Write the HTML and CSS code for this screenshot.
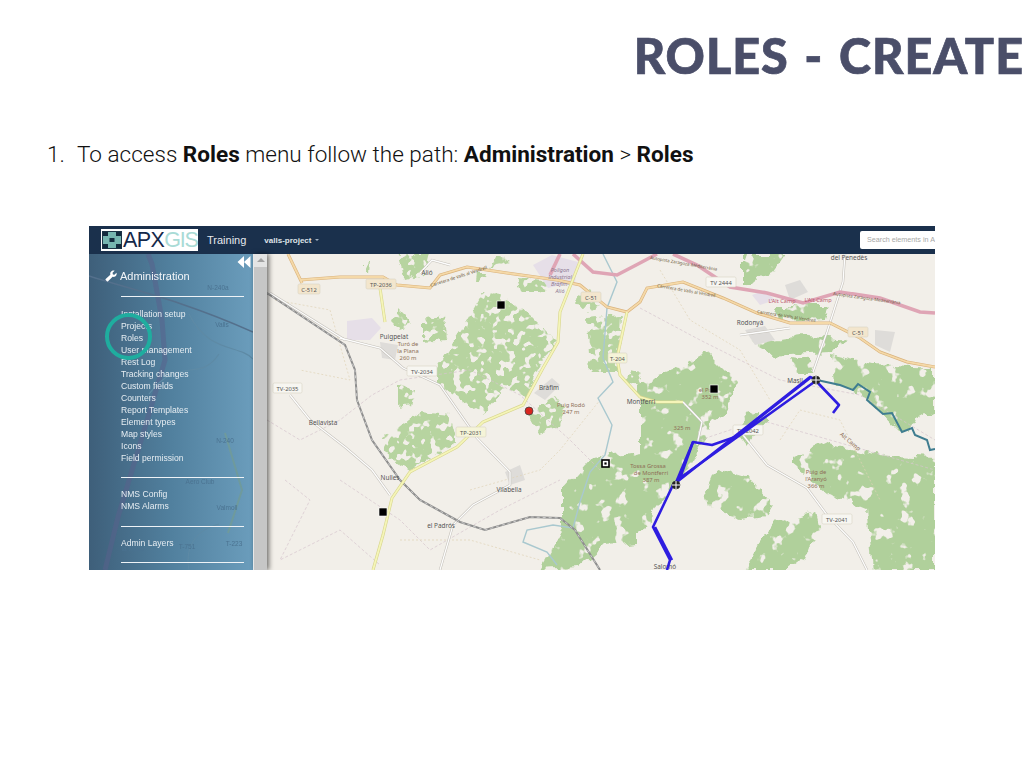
FILE: index.html
```html
<!DOCTYPE html>
<html lang="en">

<head>
    <meta charset="UTF-8">
    <title>Roles - Create</title>
    <link rel="stylesheet" href="styles.css">
</head>

<body>
    <div class="slide">
        <h1 class="slideTitle">ROLES - CREATE</h1>

        <ol class="steps">
            <li class="step">
                <span class="stepNumber">1.</span>
                <span>To access <b>Roles</b> menu follow the path: <b>Administration</b> &gt; <b>Roles</b></span>
            </li>
        </ol>

        <div class="app">
            <div class="appHeader">
                <div class="logo">
                    <svg class="logoMark" viewBox="0 0 20 18">
                        <rect width="20" height="18" fill="#1c3346" />
                        <rect x="1" y="1" width="18" height="16" fill="#76b5b0" />
                        <rect x="1" y="1" width="5" height="4" fill="#132a3e" />
                        <rect x="14" y="1" width="5" height="4" fill="#132a3e" />
                        <rect x="7.5" y="7" width="5" height="4" fill="#132a3e" />
                        <rect x="1" y="13" width="5" height="4" fill="#132a3e" />
                        <rect x="14" y="13" width="5" height="4" fill="#132a3e" />
                    </svg>
                    <span class="logoApx">APX</span><span class="logoGis">GIS</span>
                </div>
                <span class="appName">Training</span>
                <span class="projectName">valls-project</span>
                <span class="projectCaret"></span>
                <div class="searchBox">Search elements in A</div>
            </div>

            <div class="appBody">
                <div class="sidebar">
                    <svg class="sidebarMap" viewBox="0 0 164 316">
                        <path d="M59 0 63 10 73 66 76 106 60 160 29 263 16 316" fill="none" stroke="#5a5f8c" stroke-width="5" opacity=".5" />
                        <path d="M0 22 C40 35 90 45 164 78" fill="none" stroke="#54708c" stroke-width="1.5" />
                        <path d="M100 60 C120 100 150 90 164 105 M60 140 C90 100 110 130 130 100" fill="none" stroke="#5e8aa5" stroke-width="1.2" />
                        <path d="M136 179 153 236 139 279" fill="none" stroke="#6f9a9c" stroke-width="2" />
                        <path d="M100 316 C95 290 110 275 130 270" fill="none" stroke="#5e8aa5" stroke-width="1" />
                        <text class="ghostText" x="129" y="36">N-240a</text>
                        <text class="ghostText" x="133" y="73">Valls</text>
                        <text class="ghostText" x="136" y="189">N-240</text>
                        <text class="ghostText" x="111" y="230">Aero Club</text>
                        <text class="ghostText" x="138" y="256">Valmoll</text>
                        <text class="ghostText" x="44" y="297">la Masó</text>
                        <text class="ghostText" x="98" y="295">T-751</text>
                        <text class="ghostText" x="145" y="292">T-223</text>
                    </svg>
                    <button class="collapseBtn" type="button">
                        <svg viewBox="0 0 14 12" width="14" height="12">
                            <path d="M7 0 L0.5 6 L7 12 Z M13.5 0 L7 6 L13.5 12 Z" fill="#fff" />
                        </svg>
                    </button>
                    <div class="sidebarTitle">
                        <svg class="wrench" viewBox="0 0 14 14">
                            <path d="M2.2 13.2 L.8 11.8 a1 1 0 0 1 0-1.4 L6.2 5.4 C5.7 3.6 6.6 1.6 8.4 .9 C9.3 .5 10.3 .5 11.2 .9 L8.8 3.3 L9.2 5.2 L11 5.6 L13.4 3.2 C13.8 4.2 13.7 5.3 13.2 6.2 C12.3 7.8 10.5 8.4 8.9 7.9 L3.6 13.2 a1 1 0 0 1-1.4 0 Z" fill="#fff" />
                        </svg>
                        Administration
                    </div>
                    <div class="menuGroup menuMain">
                        <a>Installation setup</a>
                        <a>Projects</a>
                        <a>Roles</a>
                        <a>User management</a>
                        <a>Rest Log</a>
                        <a>Tracking changes</a>
                        <a>Custom fields</a>
                        <a>Counters</a>
                        <a>Report Templates</a>
                        <a>Element types</a>
                        <a>Map styles</a>
                        <a>Icons</a>
                        <a>Field permission</a>
                    </div>
                    <div class="menuGroup menuNms">
                        <a>NMS Config</a>
                        <a>NMS Alarms</a>
                    </div>
                    <div class="menuGroup menuLayers">
                        <a>Admin Layers</a>
                    </div>
                    <div class="highlightRing"></div>
                </div>

                <div class="scrollbar">
                    <div class="scrollUp"><span class="scrollArrow"></span></div>
                    <div class="scrollThumb"></div>
                </div>

                <svg class="map" viewBox="267 254 668 316" preserveAspectRatio="none">
                    <defs>
                        <!-- breaks the forest shapes up into field-like patches -->
                        <filter id="patchy" filterUnits="userSpaceOnUse" x="267" y="254" width="668" height="316" color-interpolation-filters="sRGB">
                            <feTurbulence type="fractalNoise" baseFrequency="0.13" numOctaves="2" seed="4" result="noise" />
                            <feDisplacementMap in="SourceGraphic" in2="noise" scale="9" xChannelSelector="R" yChannelSelector="G" result="moved" />
                            <feColorMatrix in="noise" type="matrix" values="0 0 0 0 0  0 0 0 0 0  0 0 0 0 0  14 0 0 0 -5.3" result="holes" />
                            <feComposite in="moved" in2="holes" operator="in" />
                        </filter>
                        <filter id="patchyDense" filterUnits="userSpaceOnUse" x="267" y="254" width="668" height="316" color-interpolation-filters="sRGB">
                            <feTurbulence type="fractalNoise" baseFrequency="0.07" numOctaves="3" seed="9" result="noise" />
                            <feDisplacementMap in="SourceGraphic" in2="noise" scale="14" xChannelSelector="R" yChannelSelector="G" result="moved" />
                            <feColorMatrix in="noise" type="matrix" values="0 0 0 0 0  0 0 0 0 0  0 0 0 0 0  14 0 0 0 -4.5" result="holes" />
                            <feComposite in="moved" in2="holes" operator="in" />
                        </filter>
                        <g id="whiteRoads">
                            <path d="M270 293 345 340" />
                            <path d="M340 338 380 348 403 368 440 385 477 438 510 472 510 485 473 505 453 525 440 570" />
                            <path d="M290 395 310 420 345 447 372 470 390 495" />
                            <path d="M743 435 767 465 807 488 827 515 853 542 867 570" />
                            <path d="M813 372 827 332 843 282 845 254" />
                            <path d="M683 402 702 422 697 445" />
                            <path d="M420 273 432 260 450 265" />
                            <path d="M740 335 790 328" />
                        </g>
                        <g id="orangeRoads">
                            <path d="M288 254 302 283" />
                            <path d="M300 280 340 277 383 277 397 285 430 288 440 275 467 267 507 273 557 280 580 285 607 307 627 312 640 302 647 288 683 282 723 298 757 313 790 323 830 323 860 338 880 352 907 362 935 367" />
                        </g>
                        <g id="yellowRoads">
                            <path d="M373 570 383 535 392 498 410 472 457 447 483 422 523 405 543 368 558 342 560 312 583 254" />
                            <path d="M627 312 617 358 620 375 640 397 657 402 683 402" />
                            <path d="M380 288 385 322" />
                        </g>
                        <g id="motorway">
                            <path d="M560 254 550 275" />
                            <path d="M573 254 593 272 617 275 640 263 657 254" />
                            <path d="M673 254 697 265 730 287 767 293 803 303 840 292 880 298 920 312 935 313" />
                        </g>
                    </defs>

                    <!-- forest -->
                    <g class="forest" filter="url(#patchy)">
                        <path d="M437 368 463 328 483 292 500 295 530 315 557 342 540 365 527 398 507 385 483 415 457 398 437 382Z" />
                        <path d="M383 438 400 428 420 412 450 415 457 442 410 470 387 455Z" />
                        <path d="M398 385 415 390 412 405 398 407Z" />
                        <path d="M397 254 430 254 425 275 405 280Z" />
                        <path d="M423 320 445 315 447 340 423 342Z" />
                        <path d="M587 318 622 315 620 350 618 372 590 372Z" />
                        <path d="M540 432 560 425 565 408 555 395 528 415Z" />
                        <path d="M497 255 510 262 490 268Z" />
                        <path d="M517 278 547 280 545 292 522 292Z" />
                        <path d="M477 272 487 272 485 281 476 280Z" />
                        <path d="M363 262 370 262 369 272 363 272Z" />
                        <path d="M632 370 640 372 640 385 625 382Z" />
                        <path d="M575 300 590 290 600 305 585 312Z" />
                        <path d="M398 308 412 322 400 330 392 322Z" />
                    </g>
                    <g class="forestDark" filter="url(#patchyDense)">
                        <path d="M563 492 593 458 640 452 640 542 607 545 580 568 540 570 563 530Z" />
                        <path d="M640 382 683 365 707 352 737 382 727 412 710 422 703 442 677 485 663 502 640 535Z" />
                        <path d="M707 492 717 468 750 478 773 505 767 515 740 518 710 508Z" />
                        <path d="M743 570 773 525 817 512 820 525 807 558 790 570Z" />
                        <path d="M793 458 827 442 873 455 935 458 935 570 873 570 867 508 827 492 793 465Z" />
                        <path d="M743 254 785 254 773 272 743 285Z" />
                        <path d="M753 342 800 335 850 340 830 352 770 355Z" />
                        <path d="M830 355 873 365 935 368 935 412 900 432 867 398 833 382Z" />
                        <path d="M790 358 810 360 812 375 795 375Z" />
                        <path d="M773 305 830 305 825 318 780 320Z" />
                        <path d="M747 445 770 420 752 410 735 430Z" />
                    </g>

                    <!-- built up and industrial -->
                    <g class="landPurple">
                        <path d="M347 321 372 318 381 328 370 340 347 340Z" />
                        <path d="M533 265 552 255 578 262 575 282 548 288Z" />
                        <path d="M752 295 765 290 775 300 760 305Z" />
                    </g>
                    <g class="landGrey">
                        <path d="M534 393 552 378 560 385 545 400Z" />
                        <path d="M505 472 520 465 525 480 510 485Z" />
                        <path d="M745 330 765 326 775 340 755 345Z" />
                        <path d="M785 285 800 280 808 292 790 300Z" />
                        <path d="M875 330 895 332 890 352 875 345Z" />
                        <path d="M380 342 398 345 395 360 382 358Z" />
                    </g>

                    <!-- boundaries -->
                    <g class="boundaryPink">
                        <path d="M267 420 300 440 340 420 372 395 400 380 470 370 520 395 570 440 600 470" />
                        <path d="M340 480 400 520 430 550 500 510 560 480" />
                        <path d="M640 308 700 340 780 380 860 395 935 440" />
                        <path d="M285 480 310 500 280 560 340 530 380 565" />
                        <path d="M700 440 760 420 830 440 935 470" />
                    </g>
                    <g class="boundaryTan">
                        <path d="M275 300 330 310 350 380 300 370" />
                        <path d="M470 490 540 470 560 450 600 400" />
                        <path d="M780 440 800 410 840 420 880 500" />
                        <path d="M660 270 690 320 740 350 770 400" />
                        <path d="M400 540 470 540 540 560" />
                    </g>

                    <!-- river -->
                    <path class="river" d="M603 254 617 282 607 308 603 358 613 382 598 398 612 425 605 455 590 472 580 502 573 528 553 525 527 530 523 542 547 552 557 565" />

                    <!-- roads -->
                    <use href="#whiteRoads" class="whiteCasing" />
                    <use href="#whiteRoads" class="whiteFill" />
                    <path class="railBase" d="M267 293 345 345 355 370 357 400 372 440 400 480 420 500 460 522 485 530 530 517 560 518 575 530 600 570" />
                    <path class="railDash" d="M267 293 345 345 355 370 357 400 372 440 400 480 420 500 460 522 485 530 530 517 560 518 575 530 600 570" />
                    <use href="#motorway" class="motorwayLine" />
                    <use href="#orangeRoads" class="orangeCasing" />
                    <use href="#orangeRoads" class="orangeFill" />
                    <use href="#yellowRoads" class="yellowCasing" />
                    <use href="#yellowRoads" class="yellowFill" />

                    <!-- place names -->
                    <g class="placeLabel">
                        <text x="427" y="275">Alió</text>
                        <text x="394" y="338.5">Puigpelat</text>
                        <text x="549" y="390">Bràfim</text>
                        <text x="641" y="404">Montferri</text>
                        <text x="390" y="480">Nulles</text>
                        <text x="509" y="492">Vilabella</text>
                        <text x="441" y="528">el Padrós</text>
                        <text x="323" y="425">Bellavista</text>
                        <text x="750" y="325">Rodonyà</text>
                        <text x="849" y="260">del Penedès</text>
                        <text x="795" y="383">Masll</text>
                        <text x="665" y="569">Salomó</text>
                    </g>
                    <g class="peakLabel">
                        <text x="408" y="346">Turó de</text>
                        <text x="408" y="353">la Plana</text>
                        <text x="408" y="360">260 m</text>
                        <text x="571" y="407">Puig Rodó</text>
                        <text x="571" y="414">247 m</text>
                        <text x="648" y="468">Tossa Grossa</text>
                        <text x="651" y="475">de Montferri</text>
                        <text x="651" y="482">387 m</text>
                        <text x="708" y="392">el Puig</text>
                        <text x="710" y="399">352 m</text>
                        <text x="682" y="430">325 m</text>
                        <text x="816" y="474">Puig de</text>
                        <text x="816" y="481">l'Aranyó</text>
                        <text x="816" y="488">366 m</text>
                        <text x="849" y="443" transform="rotate(40 849 443)">Alt Camp</text>
                    </g>
                    <g class="industryLabel">
                        <text x="560" y="272">Polígon</text>
                        <text x="560" y="279">Industrial</text>
                        <text x="560" y="286">Bràfim-</text>
                        <text x="560" y="293">Alió</text>
                    </g>
                    <g class="comarcaLabel">
                        <text x="782" y="303">L'Alt Camp</text>
                        <text x="818" y="302">L'Alt Camp</text>
                    </g>

                    <!-- road shields -->
                    <g class="shield">
                        <rect class="shieldOrange" x="298" y="284" width="22" height="10" rx="1.5" /><text x="309" y="291.5">C-512</text>
                        <rect class="shieldOrange" x="366" y="279" width="30" height="10" rx="1.5" /><text x="381" y="286.5">TP-2036</text>
                        <rect class="shieldOrange" x="581" y="292" width="20" height="10" rx="1.5" /><text x="591" y="299.5">C-51</text>
                        <rect x="407" y="366" width="30" height="10" rx="1.5" /><text x="422" y="373.5">TV-2034</text>
                        <rect class="shieldYellow" x="608" y="353" width="19" height="10" rx="1.5" /><text x="617.5" y="360.5">T-204</text>
                        <rect class="shieldYellow" x="456" y="427" width="30" height="10" rx="1.5" /><text x="471" y="434.5">TP-2031</text>
                        <rect x="273" y="383" width="29" height="10" rx="1.5" /><text x="287.5" y="390.5">TV-2035</text>
                        <rect x="706" y="277" width="30" height="10" rx="1.5" /><text x="721" y="284.5">TV 2444</text>
                        <rect class="shieldOrange" x="848" y="327" width="20" height="10" rx="1.5" /><text x="858" y="334.5">C-51</text>
                        <rect x="822" y="514" width="30" height="10" rx="1.5" /><text x="837" y="521.5">TV-2041</text>
                        <rect x="733" y="425" width="30" height="10" rx="1.5" /><text x="748" y="432.5">TV-2042</text>
                    </g>

                    <!-- road names -->
                    <g class="roadName">
                        <text x="431" y="287" transform="rotate(-18 431 287)">Carretera de Valls al Vendrell</text>
                        <text x="657" y="287" transform="rotate(10 657 287)">Carretera de Valls al Vendrell</text>
                        <text x="757" y="313" transform="rotate(9 757 313)">Carretera de Valls al Vendrell</text>
                        <text x="833" y="295" transform="rotate(8 833 295)">Autopista Zaragoza-Mediterrània</text>
                        <text x="650" y="259" transform="rotate(10 650 259)">Autopista Zaragoza-Mediterrània</text>
                    </g>

                    <!-- overlay lines -->
                    <path class="lineTeal" d="M817 380 840 385 853 390 858 384 870 392 867 400 883 414 892 413 902 432 912 428 915 435 927 440 930 450 935 449" />
                    <g class="lineBlue">
                        <path d="M817 380 810 377 673 485 653 527 670 560 667 570" />
                        <path d="M817 380 680 478 693 442 712 445 735 437 810 378" />
                        <path d="M675 485 693 442" />
                        <path d="M817 382 839 405 833 413" />
                        <path d="M655 527 672 560" />
                    </g>

                    <!-- markers -->
                    <g class="squareMarker">
                        <rect x="497" y="301" width="8" height="8" />
                        <rect x="379" y="508" width="8" height="8" />
                        <rect x="710" y="385" width="8" height="8" />
                    </g>
                    <rect class="hollowMarker" x="602" y="460" width="7" height="7" />
                    <rect x="604.4" y="462.4" width="2.2" height="2.2" />
                    <circle class="redMarker" cx="529" cy="411" r="4" />
                    <g class="crossMarker">
                        <circle cx="816" cy="380" r="4" />
                        <path d="M816 376V384M812 380H820" />
                        <circle cx="676" cy="485" r="4" />
                        <path d="M676 481V489M672 485H680" />
                    </g>
                </svg>
            </div>
        </div>
    </div>
</body>

</html>
```

FILE: styles.css
```css
html,
body {
    margin: 0;
    padding: 0;
    background-color: white;
}

.slide {
    width: 1024px;
    height: 768px;
    overflow: hidden;
    display: flex;
    flex-direction: column;
}

.slideTitle {
    margin: 25px 0 0;
    align-self: flex-end;
    font-family: "Lato", sans-serif;
    font-weight: 900;
    font-size: 48.5px;
    line-height: 60px;
    letter-spacing: 1px;
    word-spacing: 3px;
    white-space: nowrap;
    color: #4a4e69;
    -webkit-text-stroke: 0.7px #4a4e69;
}

.steps {
    list-style: none;
    margin: 54px 0 0;
    padding: 0 0 0 47px;
}

.step {
    display: flex;
    font-family: "Roboto", sans-serif;
    font-weight: 300;
    font-size: 22.55px;
    line-height: 32px;
    color: #111;
}

.step b {
    font-weight: 700;
}

.stepNumber {
    width: 30px;
}

.app {
    margin: 55px 0 0 89px;
    width: 846px;
    height: 344px;
    overflow: hidden;
    display: flex;
    flex-direction: column;
    font-family: "Liberation Sans", Arial, sans-serif;
    filter: blur(0.5px);
}

.appHeader {
    height: 28px;
    flex-shrink: 0;
    display: flex;
    align-items: center;
    padding-left: 12px;
    background-color: #1a304c;
    color: #fff;
}

.logo {
    width: 97px;
    height: 22px;
    box-sizing: border-box;
    display: flex;
    align-items: center;
    padding-left: 1px;
    background-color: #fff;
    font-size: 21.5px;
    letter-spacing: -0.6px;
    overflow: hidden;
}

.logoMark {
    width: 20px;
    height: 18px;
    margin-right: 1px;
    flex-shrink: 0;
}

.logoApx {
    color: #15294a;
}

.logoGis {
    color: #a9dbd6;
    letter-spacing: -1.2px;
}

.appName {
    margin-left: 9px;
    font-size: 11px;
    color: #e6e9ee;
}

.projectName {
    margin-left: 18px;
    font-size: 8px;
    font-weight: bold;
    color: #dfe3e8;
}

.projectCaret {
    margin-left: 4px;
    border-top: 2px solid #9fb0c0;
    border-left: 2px solid transparent;
    border-right: 2px solid transparent;
}

.searchBox {
    margin-left: auto;
    width: 75px;
    height: 18px;
    box-sizing: border-box;
    padding-left: 7px;
    border-radius: 2px 0 0 2px;
    background-color: #fff;
    color: #a8a8a8;
    font-size: 7.2px;
    line-height: 18px;
    white-space: nowrap;
    overflow: hidden;
}

.appBody {
    flex: 1;
    display: flex;
    min-height: 0;
}

.sidebar {
    position: relative;
    width: 164px;
    flex-shrink: 0;
    box-sizing: border-box;
    padding-left: 32px;
    background: linear-gradient(90deg, #3e5f7a 0%, #51809e 50%, #6b9dbc 100%);
    color: #e6edf2;
    font-size: 8.6px;
}

.sidebarMap {
    position: absolute;
    left: 0;
    top: 0;
    width: 164px;
    height: 316px;
}

.ghostText {
    font-family: "Liberation Sans", Arial, sans-serif;
    font-size: 6.5px;
    fill: #4b7391;
    text-anchor: middle;
}

.collapseBtn {
    position: absolute;
    top: 2px;
    right: 2px;
    padding: 0;
    border: none;
    background: none;
}

.sidebarTitle {
    position: relative;
    height: 42px;
    margin-left: -16px;
    margin-right: 9px;
    padding-top: 2px;
    box-sizing: border-box;
    display: flex;
    align-items: center;
    gap: 3px;
    font-size: 11px;
    color: #f2f5f8;
}

.wrench {
    width: 12px;
    height: 12px;
    flex-shrink: 0;
}

.menuGroup {
    position: relative;
    width: 123px;
    display: flex;
    flex-direction: column;
    border-top: 1.5px solid #eef3f7;
}

.menuGroup a {
    height: 12px;
    line-height: 12px;
    white-space: nowrap;
}

.menuMain {
    padding: 11px 0 13px;
}

.menuNms {
    padding: 10px 0 14px;
}

.menuLayers {
    padding: 10px 0 13px;
    border-bottom: 1.5px solid #eef3f7;
}

.highlightRing {
    position: absolute;
    left: 16px;
    top: 59px;
    width: 47px;
    height: 47px;
    box-sizing: border-box;
    border: 4px solid #1fad9f;
    border-radius: 50%;
}

.scrollbar {
    position: relative;
    z-index: 1;
    width: 14px;
    flex-shrink: 0;
    display: flex;
    flex-direction: column;
    background-color: #d6d6d6;
    box-shadow: 2px 0 5px rgba(0, 0, 0, 0.55);
    border-left: 1px solid #e8e8e8;
    box-sizing: border-box;
}

.scrollUp {
    height: 13px;
    display: flex;
    justify-content: center;
    padding-top: 4px;
    box-sizing: border-box;
    background-color: #e4e4e4;
}

.scrollArrow {
    width: 0;
    height: 0;
    border-bottom: 4px solid #a2a2a2;
    border-left: 4px solid transparent;
    border-right: 4px solid transparent;
}

.scrollThumb {
    flex: 1;
    background-color: #c6c6c6;
}

.map {
    flex: 1;
    min-width: 0;
    height: 316px;
    background-color: #f2efe9;
    display: block;
    fill: none;
}

.forest {
    fill: #b7d4a0;
}

.forestDark {
    fill: #b0d09b;
}

.landPurple {
    fill: #e6dfe8;
}

.landGrey {
    fill: #dedcd9;
}

.boundaryPink {
    fill: none;
    stroke: #d5c4cd;
    stroke-width: 0.7;
    stroke-dasharray: 3 2;
}

.boundaryTan {
    fill: none;
    stroke: #dfd2b6;
    stroke-width: 0.7;
    stroke-dasharray: 2 2;
}

.river {
    stroke: #a9c8cf;
    stroke-width: 1.4;
}

.whiteCasing {
    stroke: #c4c0b9;
    stroke-width: 2.4;
}

.whiteFill {
    stroke: #fdfdfd;
    stroke-width: 1.3;
}

.railBase {
    stroke: #8d8d8d;
    stroke-width: 2;
}

.railDash {
    stroke: #e6e6e6;
    stroke-width: 0.7;
    stroke-dasharray: 3 3;
}

.motorwayLine {
    stroke: #dfa5b5;
    stroke-width: 3.6;
}

.orangeCasing {
    stroke: #d9b27c;
    stroke-width: 3;
}

.orangeFill {
    stroke: #f5d9a8;
    stroke-width: 1.8;
}

.yellowCasing {
    stroke: #d8d68e;
    stroke-width: 3;
}

.yellowFill {
    stroke: #f5f5b8;
    stroke-width: 1.8;
}

.placeLabel text {
    font-family: "Noto Sans", sans-serif;
    font-size: 6.4px;
    fill: #555;
    text-anchor: middle;
}

.peakLabel text {
    font-family: "Noto Sans", sans-serif;
    font-size: 5.8px;
    fill: #8e6f57;
    text-anchor: middle;
}

.industryLabel text {
    font-family: "Noto Sans", sans-serif;
    font-size: 5.5px;
    font-style: italic;
    fill: #8d7a93;
    text-anchor: middle;
}

.comarcaLabel text {
    font-family: "Noto Sans", sans-serif;
    font-size: 5.6px;
    fill: #bc5a70;
    text-anchor: middle;
}

.shield rect {
    fill: #f7f6f1;
    stroke: #d8d3c4;
    stroke-width: 0.6;
}

.shield .shieldOrange {
    fill: #f3e6cd;
}

.shield .shieldYellow {
    fill: #f5f4d8;
}

.shield text {
    font-family: "Noto Sans", sans-serif;
    font-size: 5.8px;
    fill: #555;
    text-anchor: middle;
}

.roadName text {
    font-family: "Noto Sans", sans-serif;
    font-size: 4.4px;
    fill: #6c5a3c;
}

.lineTeal {
    stroke: #3f7d90;
    stroke-width: 2;
}

.lineBlue {
    fill: none;
    stroke: #2e1de0;
    stroke-width: 2.6;
    stroke-linejoin: round;
}

.squareMarker rect {
    fill: #000;
    stroke: #fff;
    stroke-width: 0.6;
}

.hollowMarker {
    fill: #fff;
    stroke: #000;
    stroke-width: 1.6;
}

.hollowMarker + rect {
    fill: #000;
}

.redMarker {
    fill: #d8261f;
    stroke: #444;
    stroke-width: 0.8;
}

.crossMarker circle {
    fill: #222;
    stroke: #333;
    stroke-width: 0.6;
}

.crossMarker path {
    stroke: #fff;
    stroke-width: 1;
}
```
